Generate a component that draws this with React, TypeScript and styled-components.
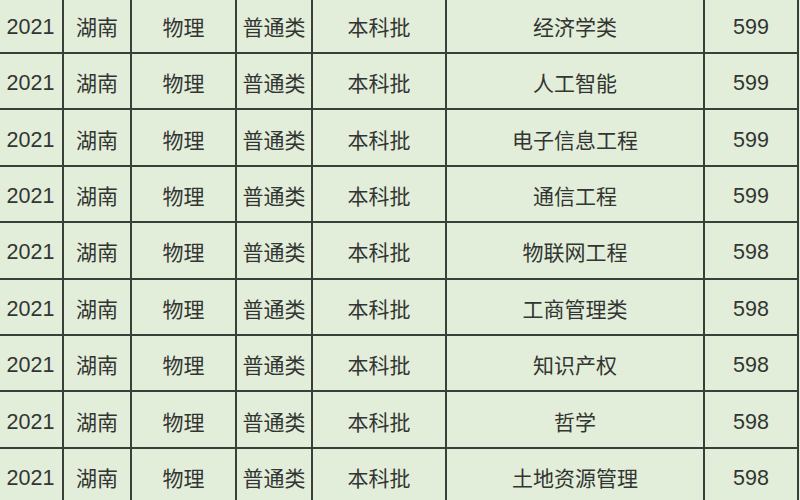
import React from "react";
import styled, { createGlobalStyle } from "styled-components";

const GlobalStyle = createGlobalStyle`
  html, body {
    margin: 0;
    padding: 0;
    background: #e2eed9;
    overflow: hidden;
  }
`;

const Grid = styled.div`
  display: grid;
  grid-template-columns: 63px 66px 103px 74px 132px 256px 92px;
  grid-auto-rows: 54.4px;
  gap: 2px;
  padding: 2px;
  width: max-content;
  margin: -4.4px 0 0 -3px;
  background: #3b3f3a;
`;

const Cell = styled.div`
  display: flex;
  align-items: center;
  justify-content: center;
  padding-top: 2px;
  box-sizing: border-box;
  background: #e2eed9;
  color: #333533;
  font-family: "Liberation Sans", "Noto Sans CJK SC", sans-serif;
  font-size: 21px;
  white-space: nowrap;
`;

const Num = styled(Cell)`
  padding-top: 5px;
  font-size: 21.5px;
`;

type Row = { major: string; score: number };

const rows: Row[] = [
  { major: "经济学类", score: 599 },
  { major: "人工智能", score: 599 },
  { major: "电子信息工程", score: 599 },
  { major: "通信工程", score: 599 },
  { major: "物联网工程", score: 598 },
  { major: "工商管理类", score: 598 },
  { major: "知识产权", score: 598 },
  { major: "哲学", score: 598 },
  { major: "土地资源管理", score: 598 },
];

export default function App() {
  return (
    <>
      <GlobalStyle />
      <Grid>
        {rows.map((r, i) => (
          <React.Fragment key={i}>
            <Num>2021</Num>
            <Cell>湖南</Cell>
            <Cell>物理</Cell>
            <Cell>普通类</Cell>
            <Cell>本科批</Cell>
            <Cell>{r.major}</Cell>
            <Num>{r.score}</Num>
          </React.Fragment>
        ))}
      </Grid>
    </>
  );
}
